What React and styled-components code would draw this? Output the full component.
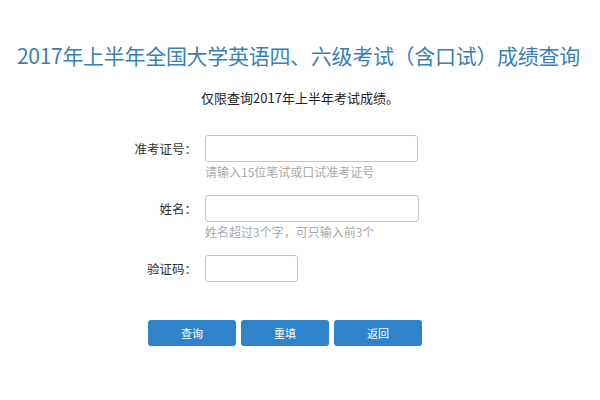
import React from "react";
import styled, { createGlobalStyle } from "styled-components";

const GlobalStyle = createGlobalStyle`
  body {
    margin: 0;
    background: #fff;
    font-family: "Microsoft YaHei", "Noto Sans CJK SC", "Liberation Sans", sans-serif;
  }
`;

const Page = styled.div`
  width: 600px;
  height: 400px;
  overflow: hidden;
  box-sizing: border-box;
  padding-top: 40px;
`;

const Title = styled.h1`
  margin: 0;
  padding-left: 17px;
  font-size: 21px;
  font-weight: normal;
  line-height: 30px;
  color: #3c7fb6;
  letter-spacing: -0.3px;
  white-space: nowrap;
`;

const Notice = styled.p`
  margin: 19px 0 0;
  text-align: center;
  font-size: 13px;
  line-height: 18px;
  color: #222;
`;

const Form = styled.div`
  margin-top: 28px;
  display: flex;
  flex-direction: column;
`;

const Row = styled.div`
  display: grid;
  grid-template-columns: 197px 1fr;
  column-gap: 8px;
  align-items: center;
  margin-bottom: ${(p) => p.$gap}px;
`;

const Label = styled.label`
  text-align: right;
  font-size: 12.5px;
  color: #333;
`;

const Input = styled.input`
  box-sizing: border-box;
  width: ${(p) => p.$w}px;
  height: 27px;
  border: 1px solid #c6c6c6;
  border-radius: 3px;
  background: #fff;
  padding: 0 6px;
  outline: none;
`;

const Hint = styled.div`
  grid-column: 2;
  margin-top: 1px;
  font-size: 12px;
  line-height: 18px;
  color: #a8a8a8;
`;

const Buttons = styled.div`
  display: flex;
  gap: 5px;
  padding-left: 148px;
  margin-top: 38px;
`;

const Button = styled.button`
  width: 88px;
  height: 26px;
  border: none;
  border-radius: 3px;
  background: #2e83cb;
  color: #fff;
  font-family: inherit;
  font-size: 11px;
  cursor: pointer;
`;

export default function App() {
  return (
    <Page>
      <GlobalStyle />
      <Title>2017年上半年全国大学英语四、六级考试（含口试）成绩查询</Title>
      <Notice>仅限查询2017年上半年考试成绩。</Notice>
      <Form>
        <Row $gap={14}>
          <Label>准考证号：</Label>
          <Input $w={213} />
          <Hint>请输入15位笔试或口试准考证号</Hint>
        </Row>
        <Row $gap={14}>
          <Label>姓名：</Label>
          <Input $w={214} />
          <Hint>姓名超过3个字，可只输入前3个</Hint>
        </Row>
        <Row $gap={0}>
          <Label>验证码：</Label>
          <Input $w={93} />
        </Row>
      </Form>
      <Buttons>
        <Button>查询</Button>
        <Button>重填</Button>
        <Button>返回</Button>
      </Buttons>
    </Page>
  );
}
